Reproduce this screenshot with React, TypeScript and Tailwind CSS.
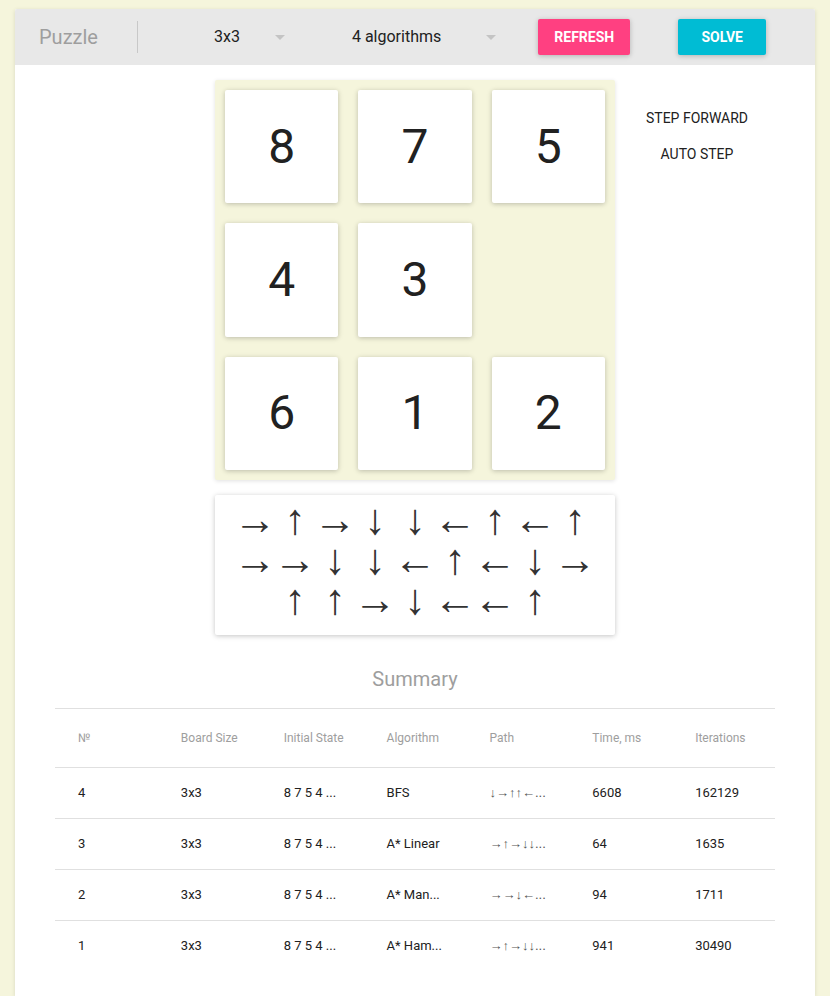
import React from 'react';

const board = [8, 7, 5, 4, 3, 0, 6, 1, 2];

const path = '→↑→↓↓←↑←↑→→↓↓←↑←↓→↑↑→↓←←↑'.split('');

const rows = [
  { n: '4', size: '3x3', init: '8 7 5 4 ...', algo: 'BFS', path: '↓→↑↑←...', time: '6608', iter: '162129' },
  { n: '3', size: '3x3', init: '8 7 5 4 ...', algo: 'A* Linear', path: '→↑→↓↓...', time: '64', iter: '1635' },
  { n: '2', size: '3x3', init: '8 7 5 4 ...', algo: 'A* Man...', path: '→→↓←...', time: '94', iter: '1711' },
  { n: '1', size: '3x3', init: '8 7 5 4 ...', algo: 'A* Ham...', path: '→↑→↓↓...', time: '941', iter: '30490' },
];

const headers = ['№', 'Board Size', 'Initial State', 'Algorithm', 'Path', 'Time, ms', 'Iterations'];

const Caret = () => (
  <span className="inline-block w-0 h-0 border-l-[5px] border-r-[5px] border-t-[5px] border-l-transparent border-r-transparent border-t-[#c4c4c4]" />
);

export default function App() {
  return (
    <div className="min-h-screen bg-[#f5f5dc] pt-[9px] px-[15px] font-['Roboto',sans-serif]">
      <div className="bg-white min-h-[987px] shadow-[0_1px_4px_rgba(0,0,0,0.12)] rounded-t-[2px]">
        {/* toolbar */}
        <div className="h-[56px] bg-[#e8e8e8] flex items-center rounded-t-[2px]">
          <div className="w-[122px] pl-[24px] text-[20px] text-[#9e9e9e] leading-none">Puzzle</div>
          <div className="w-px h-[32px] bg-[#c8c8c8]" />
          <div className="ml-[76px] flex items-center">
            <span className="text-[16px] text-[#212121]">3x3</span>
            <span className="ml-[35px] flex"><Caret /></span>
          </div>
          <div className="ml-[67px] flex items-center">
            <span className="text-[16px] text-[#212121]">4 algorithms</span>
            <span className="ml-[45px] flex"><Caret /></span>
          </div>
          <button className="ml-[42px] w-[92px] h-[36px] rounded-[2px] bg-[#ff4081] text-white text-[14px] font-bold shadow-[0_1px_6px_rgba(0,0,0,0.12),0_1px_4px_rgba(0,0,0,0.12)]">
            REFRESH
          </button>
          <button className="ml-[48px] w-[88px] h-[36px] rounded-[2px] bg-[#00bcd4] text-white text-[14px] font-bold shadow-[0_1px_6px_rgba(0,0,0,0.12),0_1px_4px_rgba(0,0,0,0.12)]">
            SOLVE
          </button>
        </div>

        {/* board area */}
        <div className="grid grid-cols-[1fr_400px_1fr] pt-[15px]">
          <div />
          <div>
            <div className="w-[400px] h-[400px] bg-[#f5f5dc] rounded-[2px] p-[10px] grid grid-cols-3 grid-rows-3 gap-[20px] shadow-[0_1px_4px_rgba(0,0,0,0.12)]">
              {board.map((v, i) =>
                v === 0 ? (
                  <div key={i} />
                ) : (
                  <div
                    key={i}
                    className="bg-white rounded-[2px] flex items-center justify-center text-[48px] text-[#212121] shadow-[0_1px_6px_rgba(0,0,0,0.12),0_1px_4px_rgba(0,0,0,0.12)]"
                  >
                    {v}
                  </div>
                )
              )}
            </div>
            <div className="mt-[15px] w-[400px] h-[140px] bg-white rounded-[2px] py-[10px] flex justify-center shadow-[0_1px_6px_rgba(0,0,0,0.12),0_1px_4px_rgba(0,0,0,0.12)]">
              <div className="w-[360px] flex flex-wrap justify-center content-start">
                {path.map((a, i) => (
                  <span
                    key={i}
                    className="w-[40px] h-[40px] flex items-center justify-center overflow-visible"
                  >
                    <span className="text-[43px] leading-[40px] -mt-[12px] text-[#333] font-['Liberation_Sans',sans-serif]">{a}</span>
                  </span>
                ))}
              </div>
            </div>
          </div>
          <div>
            <div className="ml-[15px] mt-[20px] w-[134px] flex flex-col items-center">
              <button className="h-[36px] px-[16px] whitespace-nowrap text-[14px] text-[#212121]">STEP FORWARD</button>
              <button className="h-[36px] px-[16px] whitespace-nowrap text-[14px] text-[#212121]">AUTO STEP</button>
            </div>
          </div>
        </div>

        {/* summary */}
        <div className="mt-[30px] text-center text-[20px] leading-[28px] text-[#9e9e9e]">Summary</div>
        <div className="mx-[40px] mt-[15px] border-t border-[#e0e0e0]">
          <div className="grid grid-cols-7 h-[58px] items-center text-[12px] text-[#9e9e9e]">
            {headers.map((h) => (
              <div key={h} className="pl-[23px]">{h}</div>
            ))}
          </div>
          {rows.map((r) => (
            <div
              key={r.n}
              className="grid grid-cols-7 h-[51px] items-center text-[13px] text-[#212121] border-t border-[#e0e0e0]"
            >
              <div className="pl-[23px]">{r.n}</div>
              <div className="pl-[23px]">{r.size}</div>
              <div className="pl-[23px]">{r.init}</div>
              <div className="pl-[23px]">{r.algo}</div>
              <div className="pl-[23px] text-[#555] font-['Liberation_Sans',sans-serif]">{r.path}</div>
              <div className="pl-[23px]">{r.time}</div>
              <div className="pl-[23px]">{r.iter}</div>
            </div>
          ))}
        </div>
      </div>
    </div>
  );
}
